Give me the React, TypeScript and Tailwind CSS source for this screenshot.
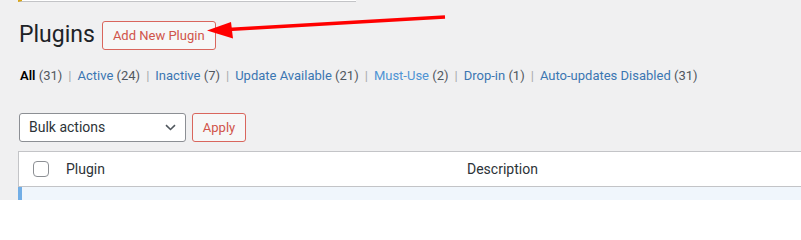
import React from 'react';

const filters = [
  { label: 'All', count: 31, current: true },
  { label: 'Active', count: 24 },
  { label: 'Inactive', count: 7 },
  { label: 'Update Available', count: 21 },
  { label: 'Must-Use', count: 2, hover: true },
  { label: 'Drop-in', count: 1 },
  { label: 'Auto-updates Disabled', count: 31 },
];

const App: React.FC = () => {
  return (
    <div className="relative w-[801px] h-[200px] overflow-hidden bg-[#f0f0f1] font-['Roboto',sans-serif] text-[#1d2327]">
      {/* bottom edge of a notice above */}
      <div className="ml-[18px] w-[338px] h-[2px] bg-white border-l-4 border-l-[#dba617] border-b border-b-[#c3c4c7]" />

      <div className="ml-[19px] mt-[18px] flex items-start">
        <h1 className="text-[23px] leading-[30px] font-normal text-[#1d2327]">Plugins</h1>
        <button className="ml-[7px] mt-[1px] h-[29px] px-[10px] rounded-[3px] border border-[#d9665d] bg-[#f6f7f7] text-[13px] text-[#d0544a]">
          Add New Plugin
        </button>
      </div>

      <div className="ml-[20px] mt-[16px] flex items-center text-[13px] leading-[20px] text-[#50575e]">
        {filters.map((f, i) => (
          <React.Fragment key={f.label}>
            {i > 0 && <span className="mx-[6px] text-[#a7aaad]">|</span>}
            <span>
              <span className={f.current ? 'font-semibold text-black' : f.hover ? 'text-[#4f94d4]' : 'text-[#3b76b1]'}>{f.label}</span>{' '}
              ({f.count})
            </span>
          </React.Fragment>
        ))}
      </div>

      <div className="ml-[19px] mt-[27px] flex items-center gap-[6px]">
        <div className="w-[167px] h-[29px] flex items-center justify-between pl-[9px] pr-[9px] bg-white border border-[#8c8f94] rounded-[3px] text-[14px] text-[#2c3338]">
          <span>Bulk actions</span>
          <svg width="11" height="7" viewBox="0 0 11 7" fill="none">
            <path d="M1 1.2l4.5 4.3 4.5-4.3" stroke="#50575e" strokeWidth="1.6" />
          </svg>
        </div>
        <button className="w-[54px] h-[29px] rounded-[3px] border border-[#d9665d] bg-[#f6f7f7] text-[13px] text-[#d0544a]">
          Apply
        </button>
      </div>

      <div className="ml-[18px] mt-[9px] bg-white border-t border-l border-[#c3c4c7]">
        <div className="h-[35px] flex items-center border-b border-[#c3c4c7] text-[14px] text-[#2c3338]">
          <span className="ml-[14px] w-[16px] h-[16px] rounded-[4px] border border-[#8c8f94] bg-white" />
          <span className="ml-[17px] w-[401px]">Plugin</span>
          <span>Description</span>
        </div>
        <div className="h-[40px] bg-[#f0f6fc] border-l-4 border-l-[#72aee6] -ml-px" />
      </div>

      <svg className="absolute left-0 top-0" width="801" height="200" viewBox="0 0 801 200">
        <line x1="228" y1="29.5" x2="445" y2="17" stroke="#ff0000" strokeWidth="3.5" />
        <polygon points="207,30.5 231,22 233,38.5" fill="#ff0000" />
      </svg>
    </div>
  );
};

export default App;
